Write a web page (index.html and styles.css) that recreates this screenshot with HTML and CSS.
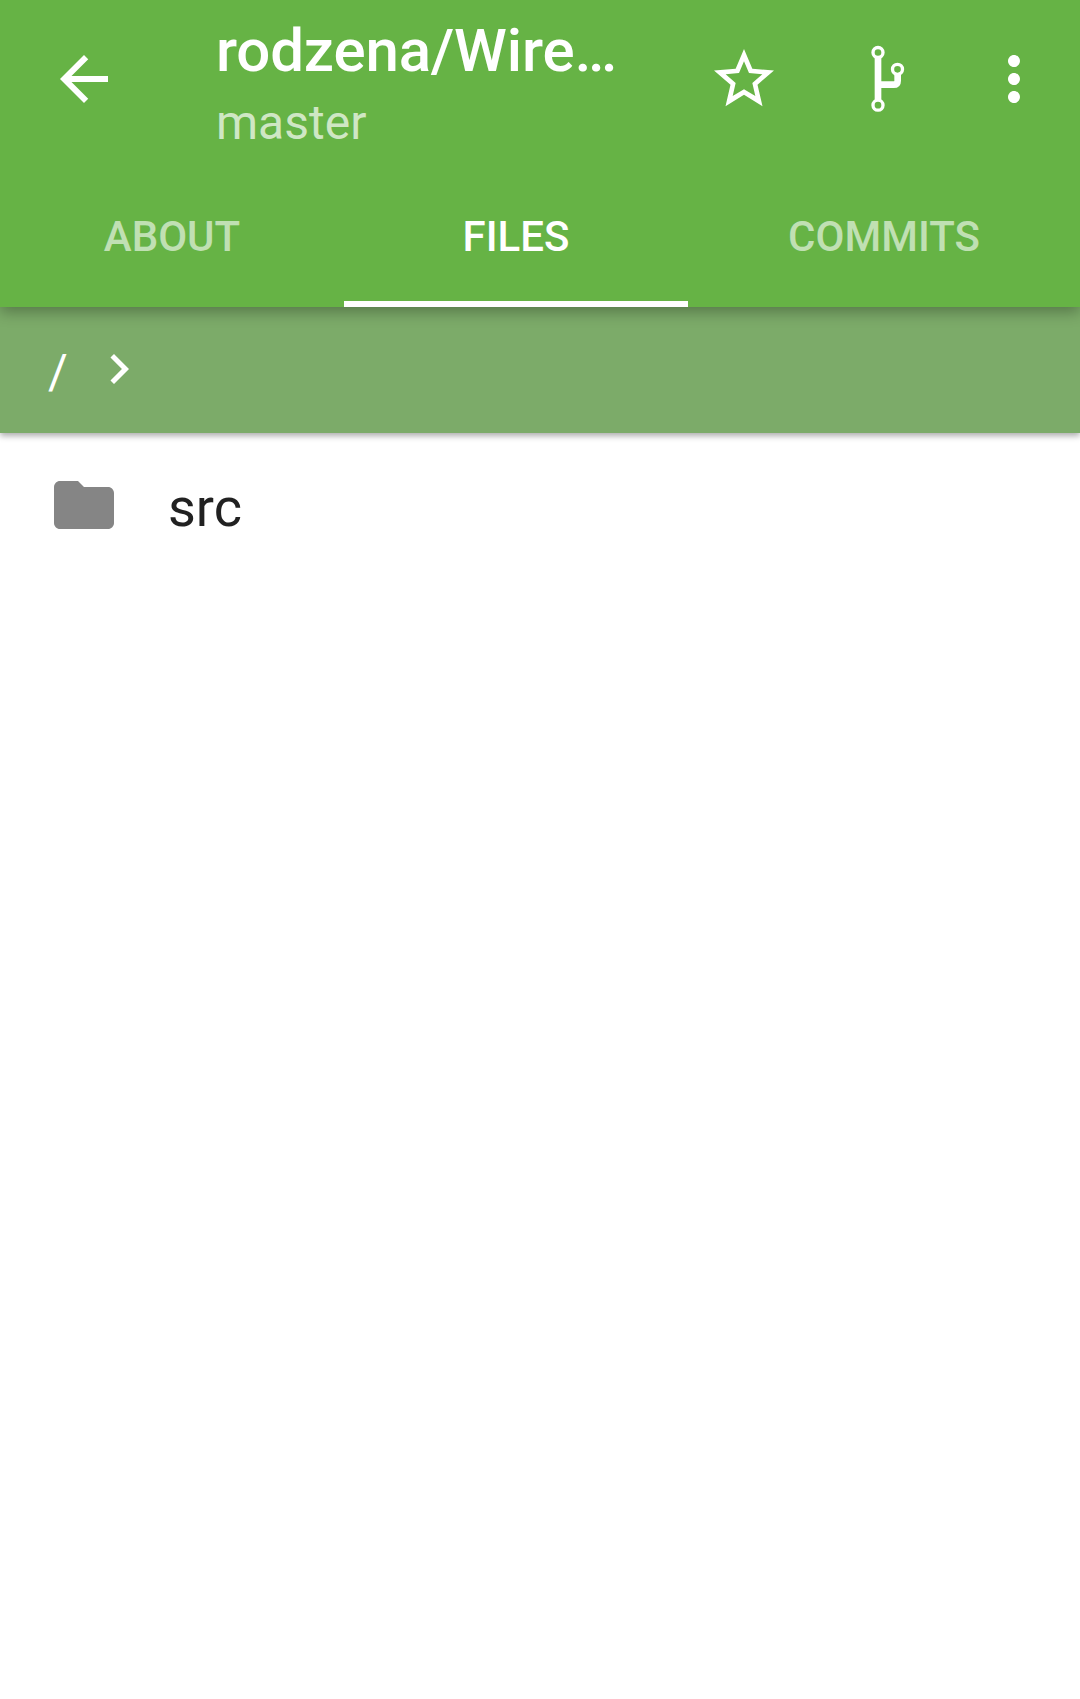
FILE: index.html
```html
<!DOCTYPE html>
<html lang="en">
<head>
<meta charset="utf-8">
<title>rodzena/Wire…</title>
<link rel="stylesheet" href="styles.css">
</head>
<body>
<header class="app-bar">
  <div class="toolbar">
    <svg class="back" viewBox="0 0 24 24"><path d="M20 11H7.83l5.59-5.59L12 4l-8 8 8 8 1.41-1.41L7.83 13H20v-2z"/></svg>
    <div class="titles">
      <h1 class="title">rodzena/Wire…</h1>
      <div class="subtitle">master</div>
    </div>
    <svg class="action" viewBox="24 129 216 216"><path fill-rule="evenodd" d="M132 147L157 206 222 211.500 172.500 254 187.500 319 132 284.500 76.500 319 91.500 254 42 211.500 107 206ZM132 184L117 219 77 222.500 107 249 98 288 132 267.500 166 288 157 249 187 222.500 147 219Z"/></svg>
    <svg class="action branch" viewBox="456 129 216 216"><g class="lines"><path d="M534 172V301M534 254H581Q593 254 593 242V222"/></g><g class="nodes"><circle cx="534" cy="157.500" r="15"/><circle cx="534" cy="315.500" r="15"/><circle cx="592.500" cy="208" r="15"/></g></svg>
    <svg class="more" viewBox="0 0 24 24"><path d="M12 8c1.100 0 2-.9 2-2s-.9-2-2-2-2 .9-2 2 .9 2 2 2zm0 2c-1.100 0-2 .9-2 2s.9 2 2 2 2-.9 2-2-.9-2-2-2zm0 6c-1.100 0-2 .9-2 2s.9 2 2 2 2-.9 2-2-.9-2-2-2z"/></svg>
  </div>
  <nav class="tabs">
    <div class="tab">ABOUT</div>
    <div class="tab selected">FILES</div>
    <div class="tab">COMMITS</div>
  </nav>
</header>
<div class="path-bar">
  <span class="crumb">/</span>
  <svg class="chevron" viewBox="0 0 24 24"><path d="M10 6L8.590 7.410 13.170 12l-4.580 4.590L10 18l6-6z"/></svg>
</div>
<main class="files">
  <div class="file">
    <svg class="folder" viewBox="0 0 24 24"><path d="M10 4H4c-1.100 0-1.990.9-1.990 2L2 18c0 1.100.9 2 2 2h16c1.100 0 2-.9 2-2V8c0-1.100-.9-2-2-2h-8l-2-2z"/></svg>
    <span class="name">src</span>
  </div>
</main>
</body>
</html>
```
FILE: styles.css
```css
* {
  box-sizing: border-box;
}

body {
  margin: 0;
  min-height: 1699px;
  overflow-x: hidden;
  background: #fff;
  font-family: Roboto, sans-serif;
}

svg {
  display: block;
  flex: none;
  width: 72px;
  height: 72px;
  fill: currentColor;
}

.app-bar {
  position: relative;
  z-index: 2;
  height: 307px;
  background: #66b345;
  color: #fff;
  box-shadow: 0 5px 14px rgba(0, 0, 0, 0.3);
}

.toolbar {
  display: flex;
  align-items: center;
  height: 163px;
  padding: 0 30px 5px 48px;
}

.titles {
  flex: 1;
  margin-left: 96px;
  padding-top: 8px;
}

.title {
  margin: 0;
  font-size: 60px;
  font-weight: 500;
  letter-spacing: -0.15px;
  line-height: 70px;
  white-space: nowrap;
}

.subtitle {
  margin-top: 9px;
  color: rgba(255, 255, 255, 0.7);
  font-size: 48px;
  line-height: 56px;
}

.action {
  margin-right: 72px;
}

.branch {
  margin-right: 54px;
}

.lines,
.nodes {
  fill: none;
  stroke: currentColor;
}

.lines {
  stroke-width: 20px;
}

.nodes {
  stroke-width: 10px;
}

.tabs {
  display: grid;
  grid-template-columns: 344px 344px 392px;
  height: 144px;
}

.tab {
  display: flex;
  align-items: center;
  justify-content: center;
  padding: 22px 0 12px;
  border-bottom: 6px solid transparent;
  color: rgba(255, 255, 255, 0.6);
  font-size: 42px;
  font-weight: 500;
  line-height: 50px;
}

.tab.selected {
  border-color: #fff;
  color: #fff;
}

.path-bar {
  position: relative;
  z-index: 1;
  display: flex;
  align-items: center;
  height: 126px;
  padding: 0 48px;
  background: #7cab69;
  color: #fff;
  font-size: 48px;
  line-height: 56px;
  box-shadow: 0 3px 6px rgba(0, 0, 0, 0.32);
}

.crumb {
  padding-top: 4px;
}

.chevron {
  width: 60px;
  height: 60px;
  margin: 0 0 3px 21px;
}

.file {
  display: flex;
  align-items: center;
  height: 144px;
  padding: 0 48px;
  color: #212121;
  font-size: 54px;
  line-height: 64px;
}

.folder {
  margin-right: 48px;
  color: #858585;
}

.name {
  padding-top: 6px;
}
```
